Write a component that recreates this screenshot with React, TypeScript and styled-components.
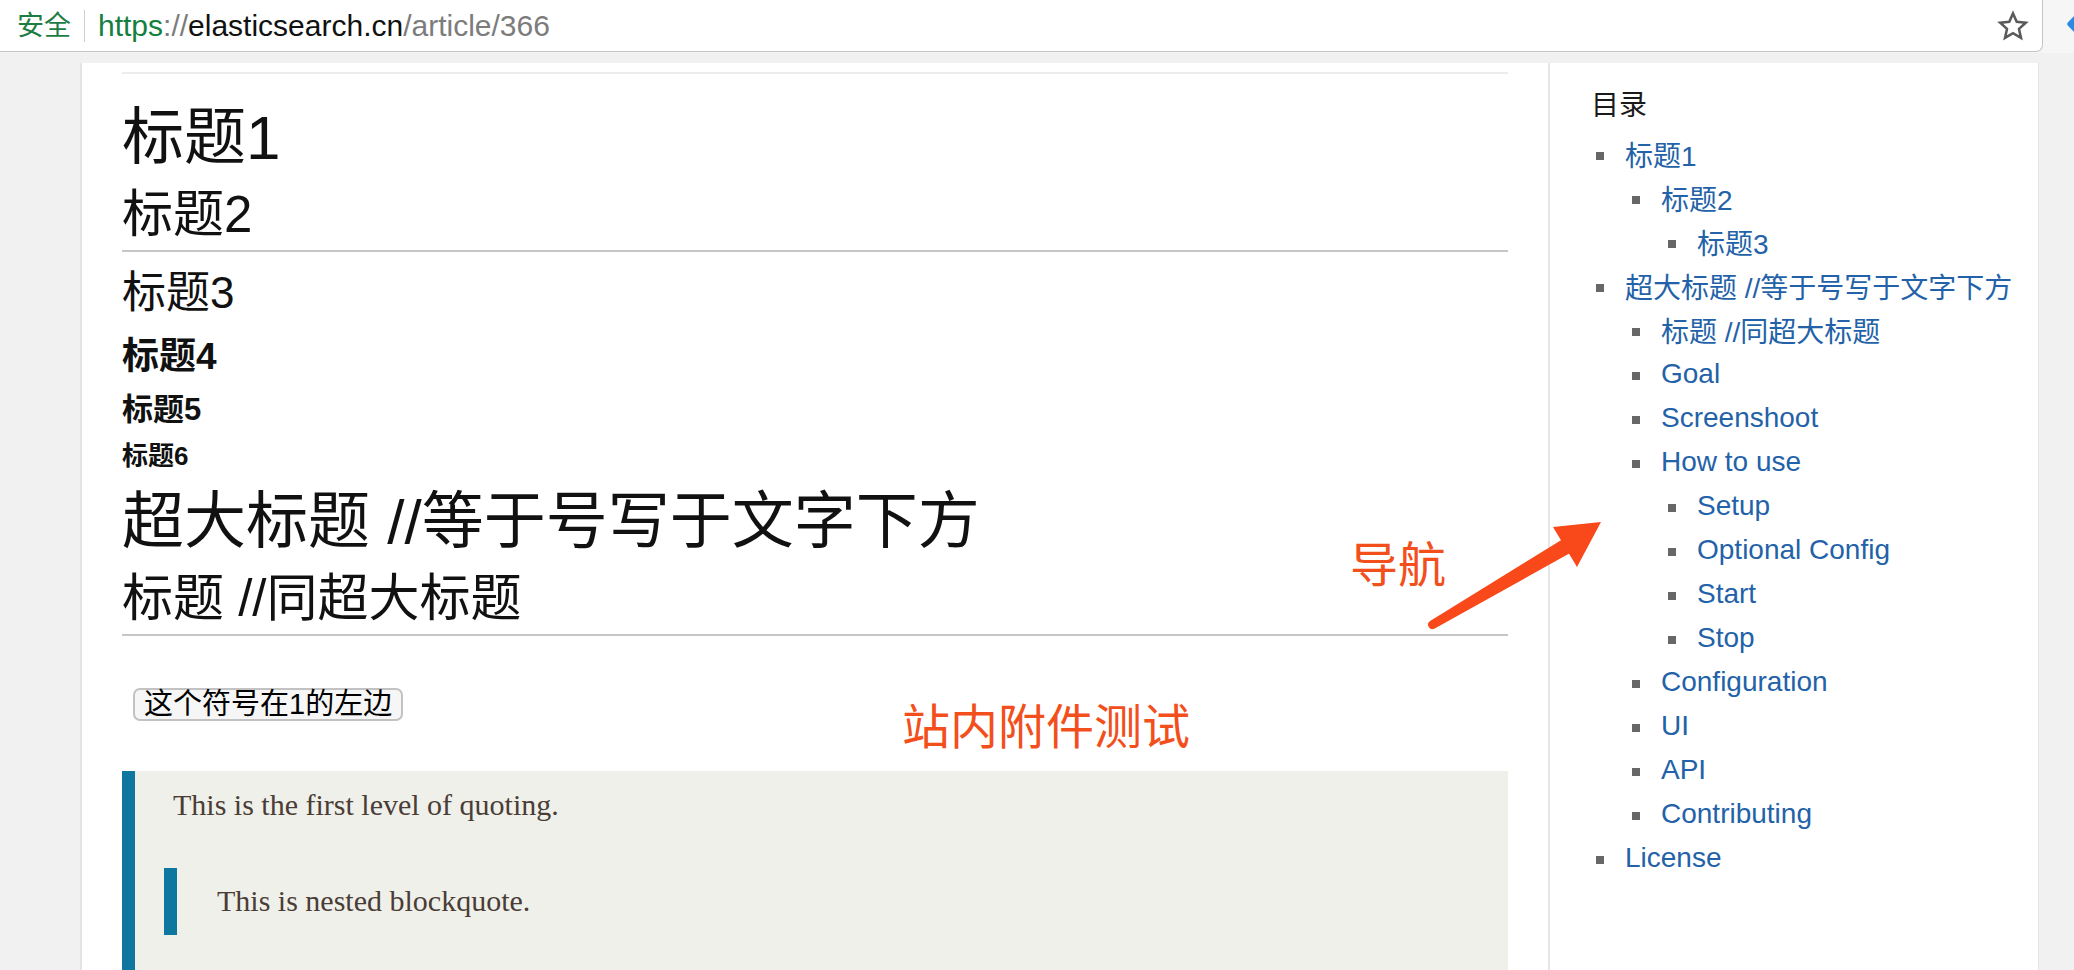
import React from 'react';
import styled, { createGlobalStyle } from 'styled-components';

const GlobalStyle = createGlobalStyle`
  html, body {
    margin: 0;
    padding: 0;
    background: #f2f2f2;
    overflow: hidden;
  }
`;

const Window = styled.div`
  position: relative;
  width: 2074px;
  height: 970px;
  overflow: hidden;
  display: flex;
  flex-direction: column;
  font-family: "Liberation Sans", "Noto Sans CJK SC", sans-serif;
  color: #111;
`;

const Toolbar = styled.div`
  display: flex;
  flex-shrink: 0;
  height: 53px;
  background: #f6f6f6;
`;

const Omnibox = styled.div`
  flex: 1;
  display: flex;
  align-items: center;
  height: 52px;
  box-sizing: border-box;
  padding: 0 13px 0 17px;
  background: #fff;
  border-right: 1px solid #c4c4c4;
  border-bottom: 1px solid #c4c4c4;
  border-bottom-right-radius: 7px;
`;

const SecureLabel = styled.span`
  font-size: 27px;
  line-height: 32px;
  color: #1d7c43;
  padding-right: 13px;
  border-right: 1px solid #cfcfcf;
`;

const Url = styled.span`
  margin-left: 13px;
  font-size: 30px;
  line-height: 32px;
  color: #808080;
  white-space: nowrap;
`;

const UrlPart = styled.span<{ $tone: 'green' | 'dark' | 'gray' }>`
  color: ${({ $tone }) =>
    $tone === 'green' ? '#14803f' : $tone === 'dark' ? '#111' : '#7c7c7c'};
`;

const StarButton = styled.span`
  margin-left: auto;
  display: flex;
  align-items: center;
`;

const ExtensionArea = styled.div`
  width: 31px;
  display: flex;
  align-items: flex-start;
  padding-top: 14px;
  box-sizing: border-box;
`;

const ExtIcon = styled.svg`
  flex-shrink: 0;
  margin-left: 23px;
`;

const Band = styled.div`
  height: 10px;
  flex-shrink: 0;
  background: #f1f1f1;
`;

const Page = styled.div`
  flex: 1;
  display: flex;
  min-height: 0;
`;

const Gutter = styled.div<{ $side: 'left' | 'right' }>`
  flex: none;
  width: ${({ $side }) => ($side === 'left' ? '80px' : '35px')};
  background: #f1f1f1;
  ${({ $side }) =>
    $side === 'left' ? 'border-right: 2px solid #e4e4e4;' : 'border-left: 1px solid #e4e4e4;'}
`;

const Main = styled.main`
  flex: none;
  width: 1468px;
  box-sizing: border-box;
  padding: 9px 40px 0;
  background: #fff;
  border-right: 2px solid #e6e6e6;
`;

const TopRule = styled.div`
  height: 2px;
  background: #ececec;
  margin-bottom: 27px;
`;

const H1 = styled.h1`
  font-size: 62px;
  line-height: 74px;
  font-weight: 400;
  margin: 14px 0 8px;
`;

const H2 = styled.h2`
  font-size: 51px;
  line-height: 62px;
  font-weight: 400;
  margin: 9px 0 14px;
  padding-bottom: 4px;
  border-bottom: 2px solid #c6c6c6;
`;

const H3 = styled.h3`
  font-size: 44px;
  line-height: 53px;
  font-weight: 400;
  margin: 14px 0 16px;
`;

const H4 = styled.h4`
  font-size: 37px;
  line-height: 43px;
  font-weight: 700;
  margin: 16px 0 14px;
`;

const H5 = styled.h5`
  font-size: 31px;
  line-height: 36px;
  font-weight: 700;
  margin: 14px 0 13px;
`;

const H6 = styled.h6`
  font-size: 26px;
  line-height: 30px;
  font-weight: 700;
  margin: 13px 0 14px;
`;

const ButtonRow = styled.p`
  margin: 52px 0 50px;
  padding-left: 11px;
  height: 33px;
`;

const KeyButton = styled.button`
  display: inline-block;
  vertical-align: top;
  height: 33px;
  box-sizing: border-box;
  padding: 0 9px;
  font-family: "Liberation Sans", "Noto Sans CJK SC", sans-serif;
  font-size: 29px;
  line-height: 27px;
  color: #000;
  background: #f6f6f6;
  border: 2px solid #c2c2c2;
  border-radius: 7px;
`;

const Quote = styled.blockquote`
  margin: 0;
  padding: 13px 30px 60px 38px;
  background: #f0f0eb;
  border-left: 13px solid #0d77a0;
  font-family: "Liberation Serif", "Times New Roman", serif;
  font-size: 30px;
  line-height: 42px;
  color: #4a3d36;
`;

const QuoteText = styled.p`
  margin: 0;
`;

const NestedQuote = styled.blockquote`
  margin: 42px 0 0 -9px;
  padding: 12px 0 13px 40px;
  border-left: 13px solid #0d77a0;
`;

const Sidebar = styled.aside`
  flex: 1;
  background: #fff;
  padding: 21px 0 0 41px;
`;

const TocTitle = styled.div`
  font-size: 28px;
  line-height: 44px;
  color: #1a1a1a;
  margin-bottom: 4px;
`;

const TocList = styled.ul`
  list-style: none;
  margin: 0;
  padding: 0;
`;

const TocItem = styled.li<{ $level: number }>`
  display: flex;
  align-items: center;
  height: 44px;
  padding-left: ${({ $level }) => 5 + ($level - 1) * 36}px;
`;

const Bullet = styled.span`
  flex: none;
  width: 8px;
  height: 8px;
  margin: 3px 21px 0 0;
  background: #676767;
`;

const TocLink = styled.a`
  font-size: 28px;
  color: #2362a8;
  text-decoration: none;
  white-space: nowrap;
`;

const Note = styled.div<{ $x: number; $y: number }>`
  position: absolute;
  left: ${({ $x }) => $x}px;
  top: ${({ $y }) => $y}px;
  font-family: "Noto Sans CJK SC", sans-serif;
  font-size: 48px;
  line-height: 48px;
  color: #f24f1c;
  white-space: nowrap;
  pointer-events: none;
`;

const ArrowMark = styled.svg`
  position: absolute;
  left: 1420px;
  top: 510px;
  pointer-events: none;
`;

const toc = [
  { level: 1, text: '标题1' },
  { level: 2, text: '标题2' },
  { level: 3, text: '标题3' },
  { level: 1, text: '超大标题 //等于号写于文字下方' },
  { level: 2, text: '标题 //同超大标题' },
  { level: 2, text: 'Goal' },
  { level: 2, text: 'Screenshoot' },
  { level: 2, text: 'How to use' },
  { level: 3, text: 'Setup' },
  { level: 3, text: 'Optional Config' },
  { level: 3, text: 'Start' },
  { level: 3, text: 'Stop' },
  { level: 2, text: 'Configuration' },
  { level: 2, text: 'UI' },
  { level: 2, text: 'API' },
  { level: 2, text: 'Contributing' },
  { level: 1, text: 'License' },
];

const App: React.FC = () => {
  return (
    <Window>
      <GlobalStyle />
      <Toolbar>
        <Omnibox>
          <SecureLabel>安全</SecureLabel>
          <Url>
            <UrlPart $tone="green">https</UrlPart>
            <UrlPart $tone="gray">://</UrlPart>
            <UrlPart $tone="dark">elasticsearch.cn</UrlPart>
            <UrlPart $tone="gray">/article/366</UrlPart>
          </Url>
          <StarButton>
            <svg width="32" height="32" viewBox="0 0 24 24">
              <polygon
                points="12,2.6 14.8,8.9 21.6,9.6 16.5,14.2 18,20.9 12,17.4 6,20.9 7.5,14.2 2.4,9.6 9.2,8.9"
                fill="none"
                stroke="#5a5a5a"
                strokeWidth="1.9"
                strokeLinejoin="miter"
              />
            </svg>
          </StarButton>
        </Omnibox>
        <ExtensionArea>
          <ExtIcon width="20" height="20" viewBox="0 0 20 20">
            <rect x="3" y="3" width="14" height="14" rx="3" transform="rotate(45 10 10)" fill="#2b8be0" />
          </ExtIcon>
        </ExtensionArea>
      </Toolbar>
      <Band />
      <Page>
        <Gutter $side="left" />
        <Main>
          <TopRule />
          <H1>标题1</H1>
          <H2>标题2</H2>
          <H3>标题3</H3>
          <H4>标题4</H4>
          <H5>标题5</H5>
          <H6>标题6</H6>
          <H1>超大标题 //等于号写于文字下方</H1>
          <H2>标题 //同超大标题</H2>
          <ButtonRow>
            <KeyButton>这个符号在1的左边</KeyButton>
          </ButtonRow>
          <Quote>
            <QuoteText>This is the first level of quoting.</QuoteText>
            <NestedQuote>
              <QuoteText>This is nested blockquote.</QuoteText>
            </NestedQuote>
          </Quote>
        </Main>
        <Sidebar>
          <TocTitle>目录</TocTitle>
          <TocList>
            {toc.map((item, i) => (
              <TocItem key={i} $level={item.level}>
                <Bullet />
                <TocLink href="#">{item.text}</TocLink>
              </TocItem>
            ))}
          </TocList>
        </Sidebar>
        <Gutter $side="right" />
      </Page>

      <Note $x={902} $y={699}>站内附件测试</Note>
      <Note $x={1350} $y={537}>导航</Note>
      <ArrowMark width="200" height="130" viewBox="0 0 200 130">
        <path
          d="M 9.7 111.2 L 145.8 27.2 L 154.2 40.8 L 14.3 118.8 A 4.5 4.5 0 0 1 9.7 111.2 Z"
          fill="#f9491a"
        />
        <path d="M 133 17 L 181 12 L 157 57 Z" fill="#f9491a" />
      </ArrowMark>
    </Window>
  );
};

export default App;
